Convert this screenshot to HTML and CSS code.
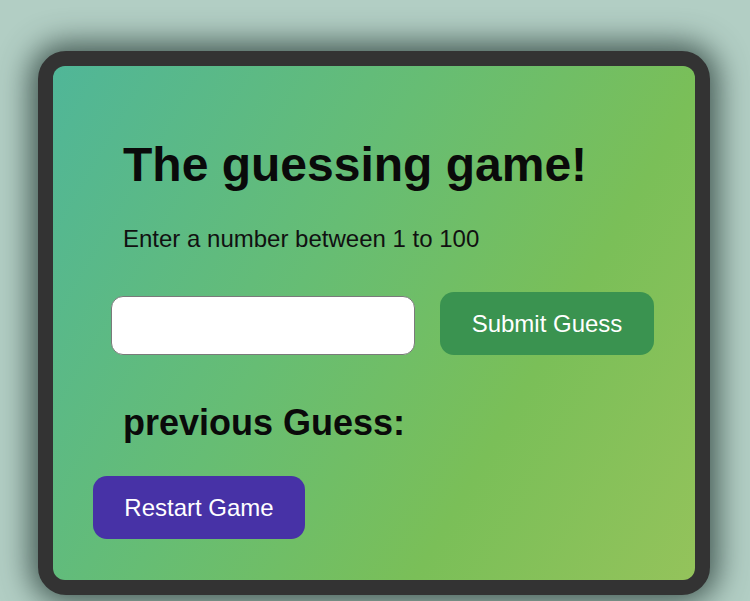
FILE: index.html
```html
<!DOCTYPE html>
<html>
<head>
<meta charset="utf-8">
<link rel="stylesheet" href="styles.css">
</head>
<body>
<div class="frame">
  <div class="screen">
    <h1 class="title">The guessing game!</h1>
    <p class="hint">Enter a number between 1 to 100</p>
    <div class="form-row">
      <input class="guess-input" type="text">
      <button class="submit-btn">Submit Guess</button>
    </div>
    <h2 class="prev">previous Guess:</h2>
    <button class="restart-btn">Restart Game</button>
  </div>
</div>
</body>
</html>
```
FILE: styles.css
```css
html, body {
  margin: 0;
  padding: 0;
}
body {
  background: #b2cec4;
  font-family: "Liberation Sans", Arial, sans-serif;
  width: 750px;
  height: 601px;
  overflow: hidden;
}
.frame {
  box-sizing: border-box;
  width: 672px;
  height: 544px;
  margin: 51px 0 0 38px;
  border: 15px solid #333333;
  border-radius: 28px;
  box-shadow: 0 0 30px 8px rgba(40, 60, 55, 0.8);
  background: #333333;
}
.screen {
  box-sizing: border-box;
  height: 100%;
  border-radius: 12px;
  background: linear-gradient(120deg, #50b698 0%, #66bd74 40%, #7abf58 70%, #94c35b 100%);
  padding: 71px 0 0 0;
  display: flex;
  flex-direction: column;
  align-items: flex-start;
}
.title {
  margin: 0 0 0 70px;
  font-size: 48px;
  line-height: 56px;
  font-weight: bold;
  color: #0a0a0a;
}
.hint {
  margin: 32px 0 0 70px;
  font-size: 24px;
  line-height: 28px;
  color: #111;
}
.form-row {
  display: flex;
  align-items: flex-end;
  gap: 25px;
  margin: 39px 0 0 58px;
}
.guess-input {
  box-sizing: border-box;
  width: 304px;
  height: 59px;
  border: 1px solid #7a7a7a;
  border-radius: 12px;
  background: #fff;
  margin: 0;
}
.submit-btn {
  box-sizing: border-box;
  width: 214px;
  height: 63px;
  border: none;
  border-radius: 14px;
  background: #3a9350;
  color: #fff;
  font-family: "Liberation Sans", Arial, sans-serif;
  font-size: 24px;
}
.prev {
  margin: 48px 0 0 70px;
  font-size: 36px;
  line-height: 40px;
  font-weight: bold;
  color: #0a0a0a;
}
.restart-btn {
  box-sizing: border-box;
  width: 212px;
  height: 63px;
  margin: 33px 0 0 40px;
  border: none;
  border-radius: 14px;
  background: #4732a6;
  color: #fff;
  font-family: "Liberation Sans", Arial, sans-serif;
  font-size: 24px;
}
```
